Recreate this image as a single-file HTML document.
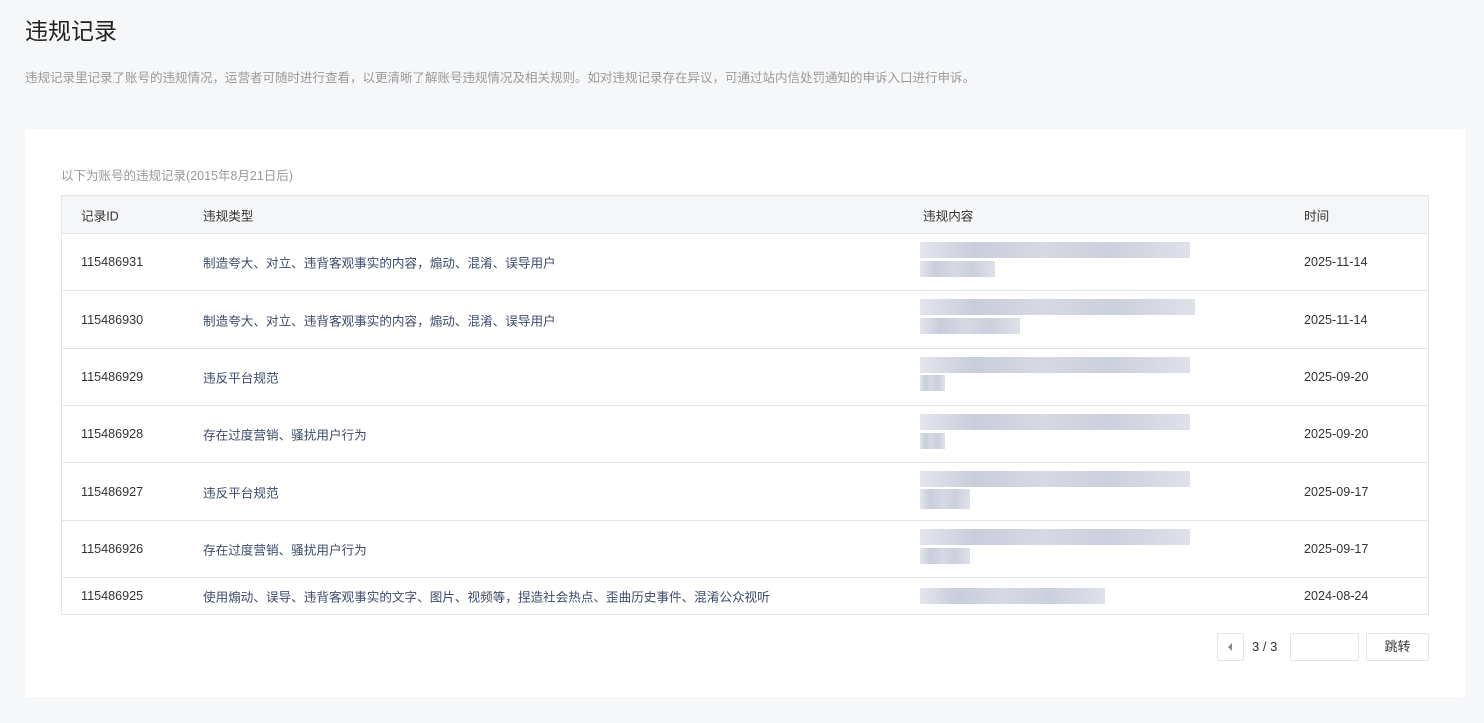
<!DOCTYPE html>
<html><head><meta charset="utf-8"><style>
*{margin:0;padding:0;box-sizing:border-box}
body{width:1484px;height:723px;background:#f6f7f9;font-family:"Liberation Sans","Noto Sans CJK SC",sans-serif;color:#333;position:relative;overflow:hidden}
.t{position:absolute;left:25px;top:12px;font-size:23px;color:#222}
.d{position:absolute;left:25px;top:67px;font-size:12.5px;color:#9a9a9a}
.card{position:absolute;left:25px;top:129px;width:1440px;height:568px;background:#fff;border-radius:2px}
.sub{position:absolute;left:61px;top:165px;font-size:12.5px;color:#9a9a9a}
.tb{position:absolute;left:61px;top:195px;width:1368px;border:1px solid #e4e6eb}
.r{position:relative;border-top:1px solid #e4e6eb;font-size:12.6px}
.r:first-child{border-top:none;background:#f5f6f8}
.r span{position:absolute;top:50%;transform:translateY(-50%);white-space:nowrap}
.c1{left:19px}.c2{left:141px;color:#3d4a6b}.c4{left:1242px}.c3{left:861px}
.r:first-child .c2{color:#333}
.bl{position:absolute;left:858px;height:16px;background:linear-gradient(90deg,#e3e5ec,#c9cdda 20%,#d6d9e3 45%,#ccd0dc 70%,#dfe1e9)}
.pg{position:absolute;top:633px;height:28px;border:1px solid #e4e6eb;border-radius:2px;font-size:13px;background:#fff}
</style></head><body>
<div class="t">违规记录</div>
<div class="d">违规记录里记录了账号的违规情况，运营者可随时进行查看，以更清晰了解账号违规情况及相关规则。如对违规记录存在异议，可通过站内信处罚通知的申诉入口进行申诉。</div>
<div class="card"></div>
<div class="sub">以下为账号的违规记录(2015年8月21日后)</div>
<div class="tb">
<div class="r" style="height:37px"><span class="c1">记录ID</span><span class="c2">违规类型</span><span class="c3">违规内容</span><span class="c4">时间</span></div>
<div class="r" style="height:57px"><span class="c1">115486931</span><span class="c2">制造夸大、对立、违背客观事实的内容，煽动、混淆、误导用户</span><div class="bl" style="top:8px;width:270px"></div><div class="bl" style="top:27px;width:75px"></div><span class="c4">2025-11-14</span></div>
<div class="r" style="height:58px"><span class="c1">115486930</span><span class="c2">制造夸大、对立、违背客观事实的内容，煽动、混淆、误导用户</span><div class="bl" style="top:8px;width:275px"></div><div class="bl" style="top:27px;width:100px"></div><span class="c4">2025-11-14</span></div>
<div class="r" style="height:57px"><span class="c1">115486929</span><span class="c2">违反平台规范</span><div class="bl" style="top:8px;width:270px"></div><div class="bl" style="top:26px;width:25px"></div><span class="c4">2025-09-20</span></div>
<div class="r" style="height:57px"><span class="c1">115486928</span><span class="c2">存在过度营销、骚扰用户行为</span><div class="bl" style="top:8px;width:270px"></div><div class="bl" style="top:27px;width:25px"></div><span class="c4">2025-09-20</span></div>
<div class="r" style="height:58px"><span class="c1">115486927</span><span class="c2">违反平台规范</span><div class="bl" style="top:8px;width:270px"></div><div class="bl" style="top:26px;width:50px;height:20px"></div><span class="c4">2025-09-17</span></div>
<div class="r" style="height:57px"><span class="c1">115486926</span><span class="c2">存在过度营销、骚扰用户行为</span><div class="bl" style="top:8px;width:270px"></div><div class="bl" style="top:27px;width:50px"></div><span class="c4">2025-09-17</span></div>
<div class="r" style="height:37px"><span class="c1">115486925</span><span class="c2">使用煽动、误导、违背客观事实的文字、图片、视频等，捏造社会热点、歪曲历史事件、混淆公众视听</span><div class="bl" style="top:10px;width:185px"></div><span class="c4">2024-08-24</span></div>
</div>
<div class="pg" style="left:1217px;width:27px"><svg width="27" height="28" style="position:absolute;left:-1px;top:-1px"><path d="M11 14l4-4v8z" fill="#888"/></svg></div>
<div style="position:absolute;left:1252px;top:639px;font-size:13px">3 / 3</div>
<div class="pg" style="left:1290px;width:69px"></div>
<div class="pg" style="left:1366px;width:63px;text-align:center;line-height:26px">跳转</div>
</body></html>
